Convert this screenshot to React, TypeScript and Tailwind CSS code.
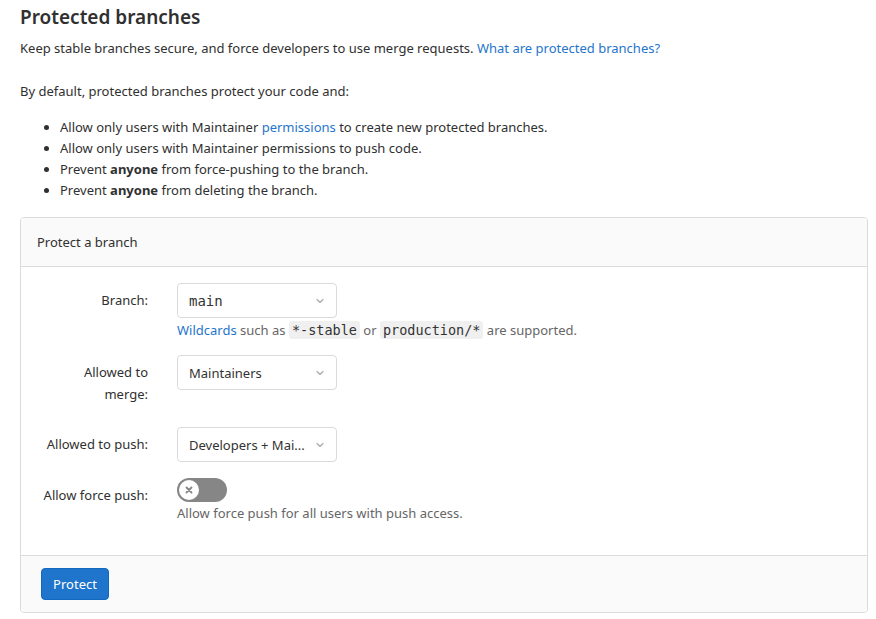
import React from "react";

const Chevron = () => (
  <svg width="12" height="12" viewBox="0 0 16 16" className="shrink-0">
    <path d="M4 6l4 4 4-4" fill="none" stroke="#a8a8a8" strokeWidth="1.5" strokeLinecap="round" strokeLinejoin="round" />
  </svg>
);

const Select = ({ children, mono }: { children: React.ReactNode; mono?: boolean }) => (
  <div className="flex h-[35px] w-[160px] items-center justify-between rounded-[4px] border border-[#dbdbdb] bg-white pl-[11px] pr-[10px]">
    {mono ? (
      <span className="text-[14px] text-[#333] [font-family:'DejaVu_Sans_Mono','Liberation_Mono',monospace]">{children}</span>
    ) : (
      <span className="text-[13px] text-[#333]">{children}</span>
    )}
    <Chevron />
  </div>
);

const Code = ({ children }: { children: React.ReactNode }) => (
  <code className="rounded-[3px] bg-[#f0f0f0] px-[3px] py-[1px] text-[13.5px] text-[#333] [font-family:'DejaVu_Sans_Mono','Liberation_Mono',monospace]">
    {children}
  </code>
);

export default function App() {
  return (
    <div className="min-h-screen bg-white px-[20px] text-[13px] leading-[20px] text-[#303030] [font-family:'Noto_Sans','Open_Sans',sans-serif]">
      <h2 className="pt-[4px] text-[19px] font-semibold leading-[26px] text-[#303030]">Protected branches</h2>
      <p className="mt-[8px]">
        Keep stable branches secure, and force developers to use merge requests.{" "}
        <a className="text-[#1f75cb]">What are protected branches?</a>
      </p>
      <p className="mt-[23px]">By default, protected branches protect your code and:</p>
      <ul className="mt-[16px] list-disc pl-[40px] leading-[21px]">
        <li>
          Allow only users with Maintainer <a className="text-[#1f75cb]">permissions</a> to create new protected branches.
        </li>
        <li>Allow only users with Maintainer permissions to push code.</li>
        <li>
          Prevent <b className="font-bold">anyone</b> from force-pushing to the branch.
        </li>
        <li>
          Prevent <b className="font-bold">anyone</b> from deleting the branch.
        </li>
      </ul>

      <div className="mt-[16px] w-[848px] overflow-hidden rounded-[4px] border border-[#dbdbdb]">
        <div className="flex h-[49px] items-center border-b border-[#dbdbdb] bg-[#fafafa] px-[16px]">
          Protect a branch
        </div>
        <div className="bg-white pb-[32px] pt-[16px]">
          <div className="flex">
            <div className="w-[127px] pt-[7px] text-right">Branch:</div>
            <div className="ml-[29px]">
              <Select mono>main</Select>
              <div className="mt-[2px] text-[#666]">
                <a className="text-[#1f75cb]">Wildcards</a> such as <Code>*-stable</Code> or <Code>production/*</Code> are supported.
              </div>
            </div>
          </div>

          <div className="mt-[15px] flex">
            <div className="w-[127px] pt-[6px] text-right leading-[22px]">
              Allowed to
              <br />
              merge:
            </div>
            <div className="ml-[29px]">
              <Select>Maintainers</Select>
            </div>
          </div>

          <div className="mt-[22px] flex">
            <div className="w-[127px] pt-[7px] text-right">Allowed to push:</div>
            <div className="ml-[29px]">
              <Select>Developers + Mai...</Select>
            </div>
          </div>

          <div className="mt-[16px] flex">
            <div className="w-[127px] pt-[7px] text-right">Allow force push:</div>
            <div className="ml-[29px]">
              <div className="relative h-[24px] w-[50px] rounded-full bg-[#868686]">
                <div className="absolute left-[2px] top-[2px] flex h-[20px] w-[20px] items-center justify-center rounded-full bg-white">
                  <svg width="10" height="10" viewBox="0 0 10 10">
                    <path d="M2.5 2.5l5 5M7.5 2.5l-5 5" stroke="#868686" strokeWidth="1.8" strokeLinecap="round" />
                  </svg>
                </div>
              </div>
              <div className="mt-[1px] text-[#666]">Allow force push for all users with push access.</div>
            </div>
          </div>
        </div>
        <div className="border-t border-[#dbdbdb] bg-[#fafafa] px-[20px] py-[12px]">
          <button className="h-[32px] w-[68px] rounded-[4px] border border-[#1068bf] bg-[#1f75cb] text-[13px] text-white">
            Protect
          </button>
        </div>
      </div>
    </div>
  );
}
